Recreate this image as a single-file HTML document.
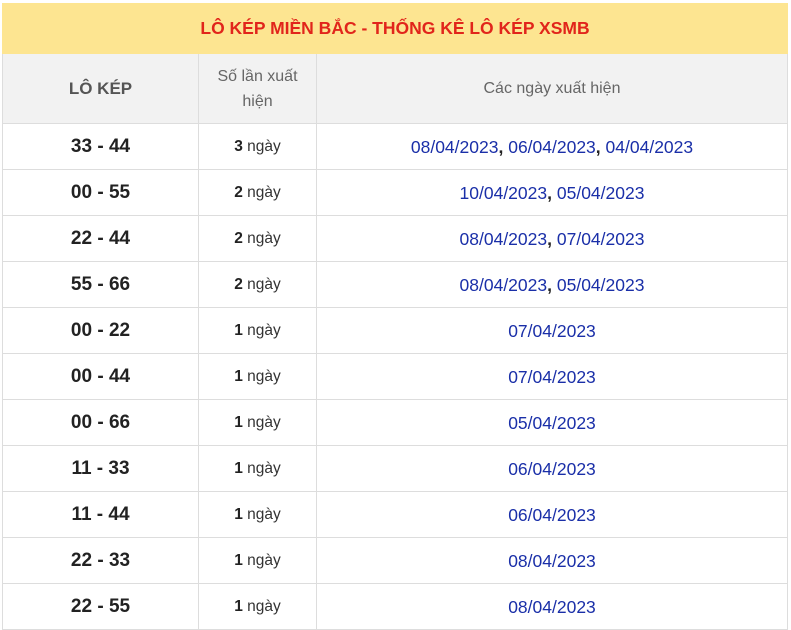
<!DOCTYPE html>
<html><head><meta charset="utf-8"><style>
body{margin:0;background:#fff;font-family:"Liberation Sans",Arial,sans-serif;}
table{position:absolute;left:2px;top:3px;width:786px;border-collapse:collapse;table-layout:fixed;}
td,th{border:1px solid #ddd;text-align:center;padding:0;}
.t{height:49px;background:#fde591;color:#e1251b;font-weight:bold;font-size:17.5px;border-color:#fde591;}
.h th{height:69px;background:#f2f2f2;color:#666;font-weight:normal;font-size:16px;line-height:25px;}
.h th.b{font-weight:bold;color:#555;font-size:17px;}
tr.r td{height:45px;font-size:17.5px;line-height:20px;}
td.a{font-weight:bold;color:#222;font-size:19px!important;}
td.n{color:#333;font-size:15.5px!important;}
td.n b{color:#222;}
td.d{color:#1a2fa8;}
td.d b{color:#222;}
</style></head><body>
<table>
<colgroup><col style="width:196px"><col style="width:118px"><col></colgroup>
<tr><td colspan="3" class="t">LÔ KÉP MIỀN BẮC - THỐNG KÊ LÔ KÉP XSMB</td></tr>
<tr class="h"><th class="b">LÔ KÉP</th><th>Số lần xuất<br>hiện</th><th>Các ngày xuất hiện</th></tr>
<tr class="r"><td class="a">33 - 44</td><td class="n"><b>3</b> ngày</td><td class="d">08/04/2023<b>,</b> 06/04/2023<b>,</b> 04/04/2023</td></tr>
<tr class="r"><td class="a">00 - 55</td><td class="n"><b>2</b> ngày</td><td class="d">10/04/2023<b>,</b> 05/04/2023</td></tr>
<tr class="r"><td class="a">22 - 44</td><td class="n"><b>2</b> ngày</td><td class="d">08/04/2023<b>,</b> 07/04/2023</td></tr>
<tr class="r"><td class="a">55 - 66</td><td class="n"><b>2</b> ngày</td><td class="d">08/04/2023<b>,</b> 05/04/2023</td></tr>
<tr class="r"><td class="a">00 - 22</td><td class="n"><b>1</b> ngày</td><td class="d">07/04/2023</td></tr>
<tr class="r"><td class="a">00 - 44</td><td class="n"><b>1</b> ngày</td><td class="d">07/04/2023</td></tr>
<tr class="r"><td class="a">00 - 66</td><td class="n"><b>1</b> ngày</td><td class="d">05/04/2023</td></tr>
<tr class="r"><td class="a">11 - 33</td><td class="n"><b>1</b> ngày</td><td class="d">06/04/2023</td></tr>
<tr class="r"><td class="a">11 - 44</td><td class="n"><b>1</b> ngày</td><td class="d">06/04/2023</td></tr>
<tr class="r"><td class="a">22 - 33</td><td class="n"><b>1</b> ngày</td><td class="d">08/04/2023</td></tr>
<tr class="r"><td class="a">22 - 55</td><td class="n"><b>1</b> ngày</td><td class="d">08/04/2023</td></tr>
</table>
</body></html>
